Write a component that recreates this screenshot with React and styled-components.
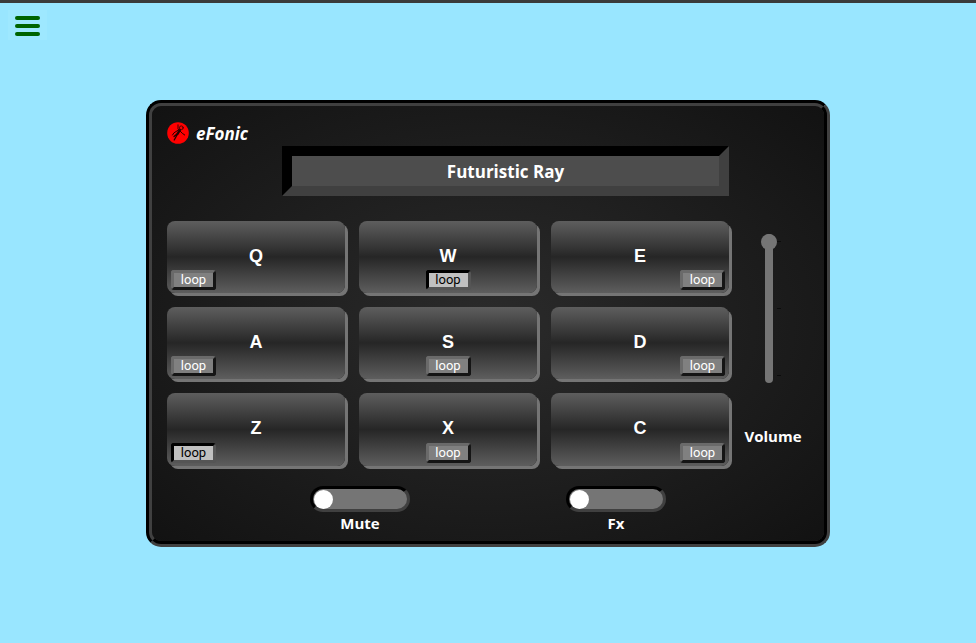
import React, { useState } from "react";
import styled, { createGlobalStyle } from "styled-components";

const GlobalStyle = createGlobalStyle`
  *, *::before, *::after { box-sizing: border-box; }
  body {
    margin: 0;
    background: #99e6ff;
    color: #fff;
    font-family: "Segoe UI", "Open Sans", sans-serif;
  }
  button, input { font: inherit; margin: 0; }
`;

const Page = styled.div`
  display: flex;
  flex-direction: column;
  min-height: 100vh;
  border-top: 3px solid #3b3b3b;
`;

const Header = styled.header`
  padding: 7px 8px 0;
`;

const MenuButton = styled.button`
  display: flex;
  flex-direction: column;
  justify-content: center;
  gap: 4px;
  width: 39px;
  height: 30px;
  padding: 2px 7px 0;
  border: 0;
  background: #9ee8ff;
  cursor: pointer;
`;

const MenuBar = styled.span`
  height: 4px;
  border-radius: 2px;
  background: #006400;
`;

const Main = styled.main`
  display: flex;
  justify-content: center;
  padding: 60px 16px;
`;

const Machine = styled.section`
  display: grid;
  grid-template-columns: 1fr 88px;
  width: 70%;
  min-width: 684px;
  padding: 14px 7px 6px 15px;
  border: 6px groove #404040;
  border-radius: 15px;
  background: radial-gradient(#2b2b2b, #121212);
`;

const Brand = styled.div`
  grid-column: 1 / -1;
  display: flex;
  align-items: center;
  gap: 7px;
  height: 26px;
`;

const BrandName = styled.h1`
  margin: 0;
  padding-top: 2px;
  font-size: 17px;
  line-height: 24px;
  font-style: italic;
  font-weight: 700;
`;

const Display = styled.output`
  justify-self: end;
  width: 447px;
  margin-bottom: 25px;
  padding-top: 2px;
  border: 10px solid;
  border-color: #000 #404040 #404040 #000;
  background: #4d4d4d;
  font-size: 17px;
  font-weight: 700;
  line-height: 28px;
  text-align: center;
`;

const Pads = styled.div`
  grid-column: 1;
  display: grid;
  grid-template-columns: repeat(3, 1fr);
  grid-template-rows: 72px 72px 73px;
  gap: 14px;
`;

const Pad = styled.div`
  display: grid;
  border-radius: 8px;
  background: linear-gradient(#5e5e5e, #262626 50%, #5e5e5e);
  box-shadow: 3px 3px #757575;
`;

const PadKey = styled.button`
  grid-area: 1 / 1;
  padding: 0 0 2px;
  border: 0;
  border-radius: 8px;
  background: none;
  color: #fff;
  font-family: "Liberation Sans", Arial, sans-serif;
  font-size: 18px;
  font-weight: 700;
  cursor: pointer;
`;

const LoopButton = styled.button`
  grid-area: 1 / 1;
  align-self: end;
  justify-self: ${({ $align }) => $align};
  width: 45px;
  height: 20px;
  margin: 0 4px 3px;
  padding: 0;
  border: 3px solid;
  border-color: ${({ $on }) =>
    $on ? "#000 #555 #555 #000" : "#6a6a6a #151515 #151515 #6a6a6a"};
  border-radius: 3px;
  background: ${({ $on }) => ($on ? "#c0c0c0" : "#808080")};
  color: ${({ $on }) => ($on ? "#000" : "#fff")};
  font-family: Roboto, sans-serif;
  font-size: 13px;
  line-height: 14px;
  cursor: pointer;
`;

const Volume = styled.div`
  grid-column: 2;
  display: flex;
  flex-direction: column;
  align-items: center;
  gap: 41px;
  padding-top: 13px;
`;

const SliderRow = styled.div`
  display: flex;
  height: 149px;
`;

const Slider = styled.input`
  appearance: none;
  writing-mode: vertical-lr;
  direction: rtl;
  width: 16px;
  height: 149px;
  background: none;
  cursor: pointer;

  &::-webkit-slider-runnable-track {
    width: 8px;
    border-radius: 4px;
    background: #757575;
  }

  &::-webkit-slider-thumb {
    appearance: none;
    width: 16px;
    height: 16px;
    margin-left: -4px;
    border-radius: 50%;
    background: #757575;
  }
`;

const Ticks = styled.div`
  display: flex;
  flex-direction: column;
  justify-content: space-between;
  width: 8px;
  padding: 7px 0;
`;

const Tick = styled.span`
  width: 4px;
  height: 1px;
  background: #0c0c0c;
`;

const ControlLabel = styled.span`
  font-size: 15px;
  font-weight: 700;
  line-height: 24px;
`;

const Switches = styled.div`
  grid-column: 1 / -1;
  display: grid;
  grid-template-columns: 256px 256px;
  justify-content: center;
  margin: 20px 0 0 -8px;
`;

const SwitchField = styled.label`
  display: flex;
  flex-direction: column;
  align-items: center;
  line-height: 22px;
  cursor: pointer;

  ${ControlLabel} {
    line-height: 23px;
  }
`;

const SwitchInput = styled.input`
  appearance: none;
  display: flex;
  align-items: center;
  justify-content: flex-start;
  width: 100px;
  height: 26px;
  padding: 0 1px;
  border: 3px solid;
  border-color: #000 #404040 #404040 #000;
  border-radius: 13px;
  background: #757575;
  cursor: pointer;

  &::before {
    content: "";
    width: 19px;
    height: 19px;
    border-radius: 50%;
    background: #fff;
  }

  &:checked {
    justify-content: flex-end;
  }
`;

const PADS = [
  ["Q", false], ["W", true], ["E", false],
  ["A", false], ["S", false], ["D", false],
  ["Z", true], ["X", false], ["C", false],
];
const ALIGN = ["start", "center", "end"];

function Logo() {
  return (
    <svg width="22" height="22" viewBox="0 0 22 22" aria-hidden="true">
      <circle cx="11" cy="11" r="10.8" fill="#f00" />
      <g fill="none" stroke="#240000" strokeLinecap="round" strokeLinejoin="round">
        <path d="M11 2.8v4l1 1.5" strokeWidth="0.9" />
        <circle cx="14.3" cy="5.8" r="1.9" strokeWidth="0.8" />
        <path d="M12.8 8.2 10.5 12" strokeWidth="2.4" />
        <path d="M11 8.3 7 10.8 5.5 13" strokeWidth="1" />
        <path d="m13 9 2.3 2.3 2.4 1.7" strokeWidth="1" />
        <path d="m10.5 12-1.6 3L7.2 18M10 12l-3 2.6" strokeWidth="1.3" />
      </g>
    </svg>
  );
}

function SwitchControl({ label }) {
  return (
    <SwitchField>
      <SwitchInput type="checkbox" role="switch" />
      <ControlLabel>{label}</ControlLabel>
    </SwitchField>
  );
}

export default function App() {
  const [loops, setLoops] = useState(PADS.map(([, on]) => on));
  const [volume, setVolume] = useState(100);
  const toggle = (i) => setLoops(loops.map((on, n) => (n === i ? !on : on)));

  return (
    <>
      <GlobalStyle />
      <Page>
        <Header>
          <MenuButton aria-label="Menu">
            <MenuBar />
            <MenuBar />
            <MenuBar />
          </MenuButton>
        </Header>
        <Main>
          <Machine>
            <Brand>
              <Logo />
              <BrandName>eFonic</BrandName>
            </Brand>
            <Display>Futuristic Ray</Display>
            <Pads>
              {PADS.map(([key], i) => (
                <Pad key={key}>
                  <PadKey>{key}</PadKey>
                  <LoopButton
                    $on={loops[i]}
                    $align={ALIGN[i % 3]}
                    aria-pressed={loops[i]}
                    onClick={() => toggle(i)}
                  >
                    loop
                  </LoopButton>
                </Pad>
              ))}
            </Pads>
            <Volume>
              <SliderRow>
                <Slider
                  id="volume"
                  type="range"
                  min="0"
                  max="100"
                  value={volume}
                  onChange={(e) => setVolume(Number(e.target.value))}
                />
                <Ticks>
                  <Tick />
                  <Tick />
                  <Tick />
                </Ticks>
              </SliderRow>
              <ControlLabel as="label" htmlFor="volume">Volume</ControlLabel>
            </Volume>
            <Switches>
              <SwitchControl label="Mute" />
              <SwitchControl label="Fx" />
            </Switches>
          </Machine>
        </Main>
      </Page>
    </>
  );
}
